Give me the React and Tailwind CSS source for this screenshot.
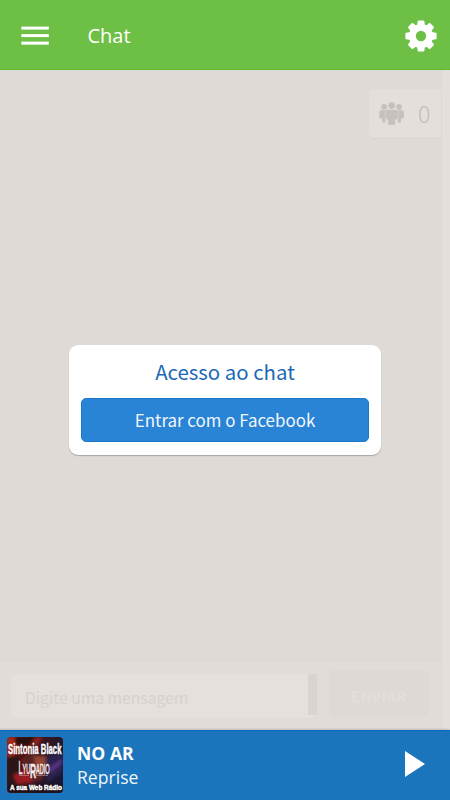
const TEETH = [0, 45, 90, 135, 180, 225, 270, 315];

function MenuIcon() {
  return (
    <svg width="28" height="20" viewBox="0 0 28 20" fill="#fff">
      <rect x="0.4" y="0.6" width="27.4" height="3" />
      <rect x="0.4" y="8.1" width="27.4" height="3" />
      <rect x="0.4" y="15.6" width="27.4" height="3" />
    </svg>
  );
}

function GearIcon() {
  return (
    <svg width="32" height="32" viewBox="-16 -16 32 32">
      <circle r="8.6" fill="none" stroke="#fff" strokeWidth="6.8" />
      {TEETH.map((deg) => (
        <path
          key={deg}
          d="M-3.9 -10.5L-3.3 -15Q-3.1 -15.6 -2.5 -15.6H2.5Q3.1 -15.6 3.3 -15L3.9 -10.5Z"
          fill="#fff"
          transform={`rotate(${deg})`}
        />
      ))}
    </svg>
  );
}

function PeopleIcon() {
  return (
    <svg width="26" height="26" viewBox="0 0 26 26" fill="#c6c1bd">
      <circle cx="5.2" cy="5.9" r="2.9" />
      <circle cx="20" cy="5.9" r="2.9" />
      <path d="M2.2 9.3H6.4V21.8H4.9Q3.2 21.8 3.2 20.2V17.7H2Q0.2 17.7 0.2 16V11.3Q0.2 9.3 2.2 9.3Z" />
      <path d="M23 9.3H18.8V21.8H20.3Q22 21.8 22 20.2V17.7H23.2Q25 17.7 25 16V11.3Q25 9.3 23 9.3Z" />
      <g stroke="#e4dfdb" strokeWidth="0.7" paintOrder="stroke">
        <circle cx="12.6" cy="4.6" r="3.4" />
        <path d="M8.2 8.7H17Q18.9 8.7 18.9 10.5V16.6Q18.9 18.5 17 18.5H16.2V22.5Q16.2 24.1 14.7 24.1H10.5Q9 24.1 9 22.5V18.5H8.2Q6.3 18.5 6.3 16.6V10.5Q6.3 8.7 8.2 8.7Z" />
      </g>
    </svg>
  );
}

function Cover() {
  return (
    <svg width="56" height="56" viewBox="0 0 56 56" className="rounded">
      <defs>
        <linearGradient id="bg" x1="0" y1="0" x2="1" y2="0.35">
          <stop offset="0" stopColor="#7d1812" />
          <stop offset="0.35" stopColor="#54100f" />
          <stop offset="0.65" stopColor="#35161f" />
          <stop offset="1" stopColor="#1b1733" />
        </linearGradient>
        <filter id="soft" x="-50%" y="-50%" width="200%" height="200%">
          <feGaussianBlur stdDeviation="1.5" />
        </filter>
      </defs>
      <rect width="56" height="56" fill="url(#bg)" />
      <g filter="url(#soft)">
        <path d="M0 0H12L6 20H0Z" fill="#a52b18" />
        <path d="M28 0H36L30 9H24Z" fill="#87241a" />
        <path d="M8 0H28L20 9L8 8Z" fill="#2a0909" />
        <path d="M0 20L12 18L14 50H0Z" fill="#2a1218" />
        <path d="M14 22L26 16L38 23L35 43L22 46Z" fill="#5a2020" />
        <path d="M27 19H39L38 37L29 38Z" fill="#914432" />
        <path d="M39 20L56 15V35L40 45Z" fill="#29224d" />
        <path d="M42 31L55 22V26L43 36Z" fill="#5a3589" />
        <path d="M6 38L22 32L26 45L10 47Z" fill="#991f20" />
        <path d="M0 48H56V56H0Z" fill="#1a0d12" />
      </g>
      <g fill="#fff" fontFamily="Liberation Sans, sans-serif" fontWeight="700">
        <text x="1.8" y="17.3" fontSize="14" stroke="#fff" strokeWidth="0.4" transform="scale(0.555 1)">Sintonia Black</text>
        <text x="3" y="53.2" fontSize="6.4" stroke="#fff" strokeWidth="0.4">A sua Web Rádio</text>
      </g>
      <text
        x="29"
        y="37.5"
        fontSize="14"
        fill="#f3eff1"
        stroke="#f3eff1"
        strokeWidth="0.5"
        fontFamily="Liberation Sans, sans-serif"
        transform="scale(0.4 1)"
      >
        <tspan fontSize="18">L</tspan>YU<tspan dx="-1" dy="4" fontSize="21" fontWeight="700">R</tspan><tspan dy="-4">ADIO</tspan>
      </text>
      <path d="M12 38.5H22M29 38.5H41" stroke="#bdb4bd" strokeWidth="0.5" />
    </svg>
  );
}

function Header() {
  return (
    <header className="flex h-[70px] shrink-0 items-center border-b border-[#5fba2c] bg-[#6dbf45] pr-[13px] pl-[21px] pt-[3px]">
      <button><MenuIcon /></button>
      <h1 className="ml-[38.5px] flex-1 font-['Open_Sans',sans-serif] text-[20px] leading-7 text-white">Chat</h1>
      <button><GearIcon /></button>
    </header>
  );
}

function LoginCard() {
  return (
    <div className="h-[110px] w-[312px] rounded-[9px] bg-white px-3 pt-[9px] text-center shadow-[0_1px_1px_rgba(0,0,0,0.25)]">
      <h2 className="h-[44.4px] text-[20.4px] leading-[35px] text-[#1b69b5]">Acesso ao chat</h2>
      <button className="h-[44px] w-full rounded-[5px] border border-[#1c78cb] bg-[#2a84d5] pb-px text-[16.9px] leading-[38px] text-[#f1f7fd]">
        Entrar com o Facebook
      </button>
    </div>
  );
}

function MessageBar() {
  return (
    <div className="flex h-[68px] shrink-0 border-t border-[#e3deda] bg-[#e1dcd8] pt-[7px] pr-3 pl-[11px]">
      <div className="mt-1 flex h-[44px] w-[306px] justify-between rounded-[5px] bg-[#e5e0dc]">
        <span className="pl-3.5 text-[15.7px] leading-[48px] text-[#d6d1cd]">Digite uma mensagem</span>
        <span className="h-[41px] w-[9px] bg-[#d9d4d0]" />
      </div>
      <button className="ml-3 h-[47px] w-[100px] rounded-[5px] bg-[#ded9d5] pt-1.5 text-[14.9px] font-bold tracking-[0.2px] text-[#e3deda]">
        ENVIAR
      </button>
    </div>
  );
}

function Player() {
  return (
    <footer className="z-10 flex h-[70px] shrink-0 items-center border-t border-[#0d68b9] bg-[#1b75bc] pr-[25px] pb-px pl-[7px] font-['Open_Sans',sans-serif] text-white shadow-[0_-1px_2px_rgba(0,0,0,0.15)]">
      <Cover />
      <div className="ml-3.5 flex-1">
        <p className="text-[17.6px] leading-6 font-bold">NO AR</p>
        <p className="text-[17.6px] leading-6 text-[#eef5fb]">Reprise</p>
      </div>
      <svg width="20" height="26" viewBox="0 0 20 26" fill="#fff" className="-mt-[3px]">
        <path d="M0 0L20 13L0 26Z" />
      </svg>
    </footer>
  );
}

export default function App() {
  return (
    <div className="flex h-[800px] w-[450px] flex-col overflow-hidden bg-[#dfdad6] font-['Noto_Sans_CJK_SC',sans-serif]">
      <Header />
      <div className="flex min-h-0 flex-1">
        <main className="flex w-[441px] flex-col">
          <div className="mt-[19px] ml-auto flex h-[49px] w-[72px] items-center rounded-l-[6px] bg-[#e4dfdb] pl-[10px] shadow-[0_1px_1px_rgba(0,0,0,0.03)]">
            <PeopleIcon />
            <span className="-mt-px ml-[13px] text-[23px] font-light text-[#c2bdb9]">0</span>
          </div>
          <div className="flex-1 pt-[207px] pl-[69px]">
            <LoginCard />
          </div>
          <MessageBar />
        </main>
        <div className="flex-1 border-l border-[#dcd7d3] bg-[#e4dfdb]" />
      </div>
      <Player />
    </div>
  );
}
